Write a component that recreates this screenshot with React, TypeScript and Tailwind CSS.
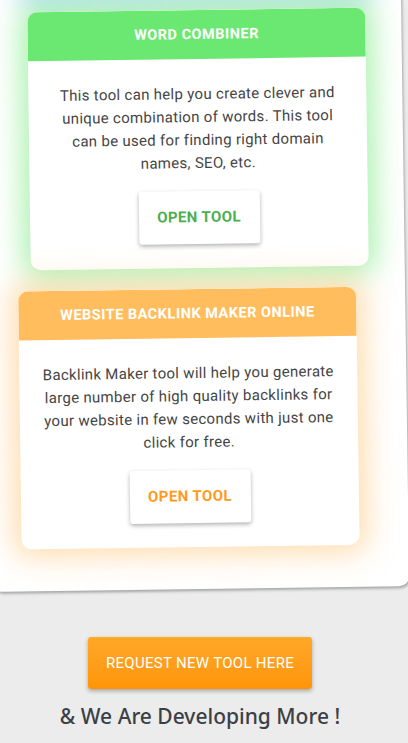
const tools = [
  {
    title: "WORD COMBINER",
    text: "This tool can help you create clever and unique combination of words. This tool can be used for finding right domain names, SEO, etc.",
    head: "bg-[#6be872]",
    glow: "shadow-[0_0_28px_8px_rgba(108,232,114,0.55)]",
    btn: "text-[#4caf50]",
    place: "ml-[43px] mt-[16px]",
  },
  {
    title: "WEBSITE BACKLINK MAKER ONLINE",
    text: "Backlink Maker tool will help you generate large number of high quality backlinks for your website in few seconds with just one click for free.",
    head: "bg-[#ffbd5e]",
    glow: "shadow-[0_0_28px_8px_rgba(255,190,100,0.5)]",
    btn: "text-[#ff9a1e]",
    place: "ml-[30px] mt-[21px]",
  },
];

function ToolCard({ t }: { t: (typeof tools)[number] }) {
  return (
    <div className={`w-[338px] rounded-[10px] bg-white overflow-hidden ${t.glow} ${t.place}`}>
      <div className={`h-[49px] flex items-center justify-center text-white font-bold text-[14.5px] tracking-[0.5px] ${t.head}`}>
        {t.title}
      </div>
      <div className="flex flex-col items-center px-[22px] pt-[24px] pb-[24px]">
        <p className="text-center text-[15px] leading-[23px] tracking-[0.3px] text-[#454545]">{t.text}</p>
        <button
          className={`mt-[16px] w-[121px] h-[53px] rounded-[3px] bg-white font-bold text-[15px] tracking-[0.4px] shadow-[0_2px_4px_rgba(0,0,0,0.3)] ${t.btn}`}
        >
          OPEN TOOL
        </button>
      </div>
    </div>
  );
}

export default function App() {
  return (
    <div className="min-h-[743px] bg-[#ececec] overflow-hidden font-['Roboto',sans-serif]">
      {/* white panel, slightly tilted */}
      <div className="-mt-[20px] -ml-[12px] w-[417px] rotate-[-0.8deg] rounded-b-[10px] bg-white pb-[42px] shadow-[1px_2px_3px_rgba(0,0,0,0.3)]">
        {/* bottom of the previous card, only its glow shows */}
        <div className="ml-[43px] w-[338px] h-[14px] rounded-[10px] bg-white shadow-[0_0_26px_10px_rgba(130,200,245,0.6)]" />
        {tools.map((t) => (
          <ToolCard key={t.title} t={t} />
        ))}
      </div>

      <div className="flex flex-col items-center pt-[48px] pr-[8px]">
        <button className="w-[224px] h-[52px] rounded-[3px] bg-gradient-to-b from-[#ffa828] to-[#ff9505] text-white text-[15px] tracking-[0.3px] shadow-[0_2px_4px_rgba(0,0,0,0.3)]">
          REQUEST NEW TOOL HERE
        </button>
        <p className="mt-[13px] text-[21px] leading-[28px] font-medium text-[#3b3f46] font-['Noto_Sans',sans-serif]">
          &amp; We Are Developing More !
        </p>
      </div>
    </div>
  );
}
